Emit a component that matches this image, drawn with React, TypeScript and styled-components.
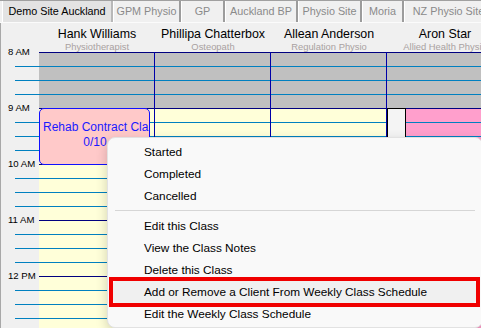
import React from 'react';
import styled, { createGlobalStyle } from 'styled-components';

const SLOT = 14;
const SLOTS = 20;
const CLOSED_SLOTS = 4;

interface ClassEvent {
  start: number;
  span: number;
  title: string;
  sub: string;
}

interface Staff {
  name: string;
  role: string;
  open: string;
  events?: ClassEvent[];
  blocked?: boolean;
}

const tabs = [
  { label: 'Demo Site Auckland', width: 111 },
  { label: 'GPM Physio', width: 68 },
  { label: 'GP', width: 44 },
  { label: 'Auckland BP', width: 73 },
  { label: 'Physio Site', width: 64 },
  { label: 'Moria', width: 42 },
  { label: 'NZ Physio Site', width: 90 },
];

const staff: Staff[] = [
  {
    name: 'Hank Williams',
    role: 'Physiotherapist',
    open: '#ffffd9',
    events: [{ start: 4, span: 4, title: 'Rehab Contract Class', sub: '0/10' }],
  },
  { name: 'Phillipa Chatterbox', role: 'Osteopath', open: '#ffffd9' },
  { name: 'Allean Anderson', role: 'Regulation Physio', open: '#ffffd9' },
  { name: 'Aron Star', role: 'Allied Health Physio', open: '#ff9fcc', blocked: true },
];

const hours = ['8 AM', '9 AM', '10 AM', '11 AM', '12 PM'];

const menuGroups = [
  ['Started', 'Completed', 'Cancelled'],
  [
    'Edit this Class',
    'View the Class Notes',
    'Delete this Class',
    'Add or Remove a Client From Weekly Class Schedule',
    'Edit the Weekly Class Schedule',
  ],
];
const highlighted = 'Add or Remove a Client From Weekly Class Schedule';

const App: React.FC = () => {
  return (
    <>
      <GlobalStyle />
      <Window>
        <TabBar>
          {tabs.map((t, i) => (
            <Tab key={t.label} $active={i === 0} style={{ width: t.width }}>
              {t.label}
            </Tab>
          ))}
        </TabBar>

        <Main>
          <HeaderRow>
            <TimeSpacer />
            {staff.map((s) => (
              <StaffHeader key={s.name}>
                <StaffName>{s.name}</StaffName>
                <StaffRole>{s.role}</StaffRole>
              </StaffHeader>
            ))}
          </HeaderRow>

          <Body>
            <TimeColumn>
              {Array.from({ length: SLOTS }).map((_, i) => (
                <TimeSlot key={i}>
                  {i % 4 === 0 ? <HourLabel>{hours[i / 4]}</HourLabel> : <Tick />}
                </TimeSlot>
              ))}
            </TimeColumn>

            {staff.map((s) => (
              <StaffColumn key={s.name}>
                {Array.from({ length: SLOTS }).map((_, i) => (
                  <Slot
                    key={i}
                    $hour={i % 4 === 0}
                    $bg={i < CLOSED_SLOTS ? '#c0c0c0' : s.open}
                  />
                ))}
                {s.events?.map((e) => (
                  <EventBox
                    key={e.title}
                    style={{ top: e.start * SLOT, height: e.span * SLOT + 1 }}
                  >
                    <EventLine>{e.title}</EventLine>
                    <EventLine>{e.sub}</EventLine>
                  </EventBox>
                ))}
                {s.blocked && <BlockedStrip style={{ top: CLOSED_SLOTS * SLOT }} />}
              </StaffColumn>
            ))}
          </Body>
        </Main>

        <ContextMenu>
          {menuGroups.map((group, gi) => (
            <React.Fragment key={gi}>
              {gi > 0 && <Separator />}
              {group.map((item) => (
                <MenuItem key={item} $hot={item === highlighted}>
                  {item}
                </MenuItem>
              ))}
            </React.Fragment>
          ))}
        </ContextMenu>
      </Window>
    </>
  );
};

const GlobalStyle = createGlobalStyle`
  html, body {
    margin: 0;
    padding: 0;
    background: #f0f0f0;
    overflow: hidden;
  }
  * {
    box-sizing: border-box;
  }
`;

const Window = styled('div')`
  position: relative;
  width: 481px;
  height: 328px;
  overflow: hidden;
  background: #f0f0f0;
  font-family: 'Liberation Sans', Arial, sans-serif;
`;

const TabBar = styled('div')`
  display: flex;
  height: 23px;
  padding-left: 2px;
  border-top: 1px solid #a0a0a0;
  border-bottom: 1px solid #fbfbfb;
`;

const Tab = styled('div')<{ $active: boolean }>`
  flex: 0 0 auto;
  height: 21px;
  line-height: 21px;
  text-align: center;
  white-space: nowrap;
  font-size: 10.8px;
  color: ${(p) => (p.$active ? '#000' : '#8a8a8a')};
  background: ${(p) => (p.$active ? '#e3e3e3' : '#f0f0f0')};
  border-left: 1px solid #ffffff;
  border-right: 2px solid ${(p) => (p.$active ? '#b8b8b8' : '#9c9c9c')};
`;

const Main = styled('div')`
  border-left: 1px solid #a8a8a8;
`;

const HeaderRow = styled('div')`
  display: flex;
  height: 29px;
`;

const TimeSpacer = styled('div')`
  flex: 0 0 38px;
`;

const StaffHeader = styled('div')`
  flex: 0 0 116px;
  padding-top: 4px;
  text-align: center;
  white-space: nowrap;
  overflow: hidden;
`;

const StaffName = styled('div')`
  font-size: 12.4px;
  line-height: 14px;
  color: #000;
`;

const StaffRole = styled('div')`
  font-size: 9.4px;
  line-height: 11px;
  color: #a9a1a1;
`;

const Body = styled('div')`
  display: flex;
  height: 276px;
`;

const TimeColumn = styled('div')`
  flex: 0 0 38px;
  display: flex;
  flex-direction: column;
`;

const TimeSlot = styled('div')`
  height: ${SLOT}px;
  flex: 0 0 auto;
`;

const HourLabel = styled('div')`
  margin-top: -7px;
  padding-left: 7px;
  font-size: 9.6px;
  line-height: 14px;
  color: #000;
  white-space: nowrap;
`;

const Tick = styled('div')`
  margin-left: 14px;
  border-top: 1px solid #0080c0;
`;

const StaffColumn = styled('div')`
  position: relative;
  flex: 0 0 116px;
  display: flex;
  flex-direction: column;
  border-right: 1px solid #0000a8;
`;

const Slot = styled('div')<{ $hour: boolean; $bg: string }>`
  flex: 0 0 ${SLOT}px;
  background: ${(p) => p.$bg};
  border-top: 1px solid ${(p) => (p.$hour ? '#000080' : '#0080c0')};
`;

const EventBox = styled('div')`
  position: absolute;
  left: 0;
  width: 111px;
  padding: 11px 2px 0 3px;
  background: #ffc9c9;
  border: 1px solid #1010ff;
  border-radius: 5px;
  overflow: hidden;
`;

const EventLine = styled('div')`
  font-size: 12px;
  line-height: 15px;
  color: #1a1aff;
  text-align: center;
  white-space: nowrap;
`;

const BlockedStrip = styled('div')`
  position: absolute;
  left: 0;
  bottom: 0;
  width: 19px;
  background: #f4f4f4;
  border: 1px solid #000;
`;

const ContextMenu = styled('div')`
  position: absolute;
  left: 107px;
  top: 137px;
  width: 376px;
  padding: 3px 0 2px;
  background: #f9f9f9;
  border: 1px solid #e2e2e2;
  border-radius: 8px;
  box-shadow: 0 4px 12px rgba(0, 0, 0, 0.18);
`;

const MenuItem = styled('div')<{ $hot: boolean }>`
  position: relative;
  height: 22px;
  margin: 0 6px 0 5px;
  padding-left: 31px;
  line-height: 22px;
  font-size: 11.8px;
  color: #000;
  white-space: nowrap;
  border-radius: 4px;
  background: ${(p) => (p.$hot ? '#f0f0f0' : 'transparent')};

  &::after {
    content: '';
    display: ${(p) => (p.$hot ? 'block' : 'none')};
    position: absolute;
    inset: -4px -4px -4px -4px;
    border: 4px solid #f00000;
  }
`;

const Separator = styled('div')`
  height: 8px;
  margin: 0 7px;
  padding-top: 3px;

  &::after {
    content: '';
    display: block;
    border-top: 1px solid #d6d6d6;
  }
`;

export default App;
